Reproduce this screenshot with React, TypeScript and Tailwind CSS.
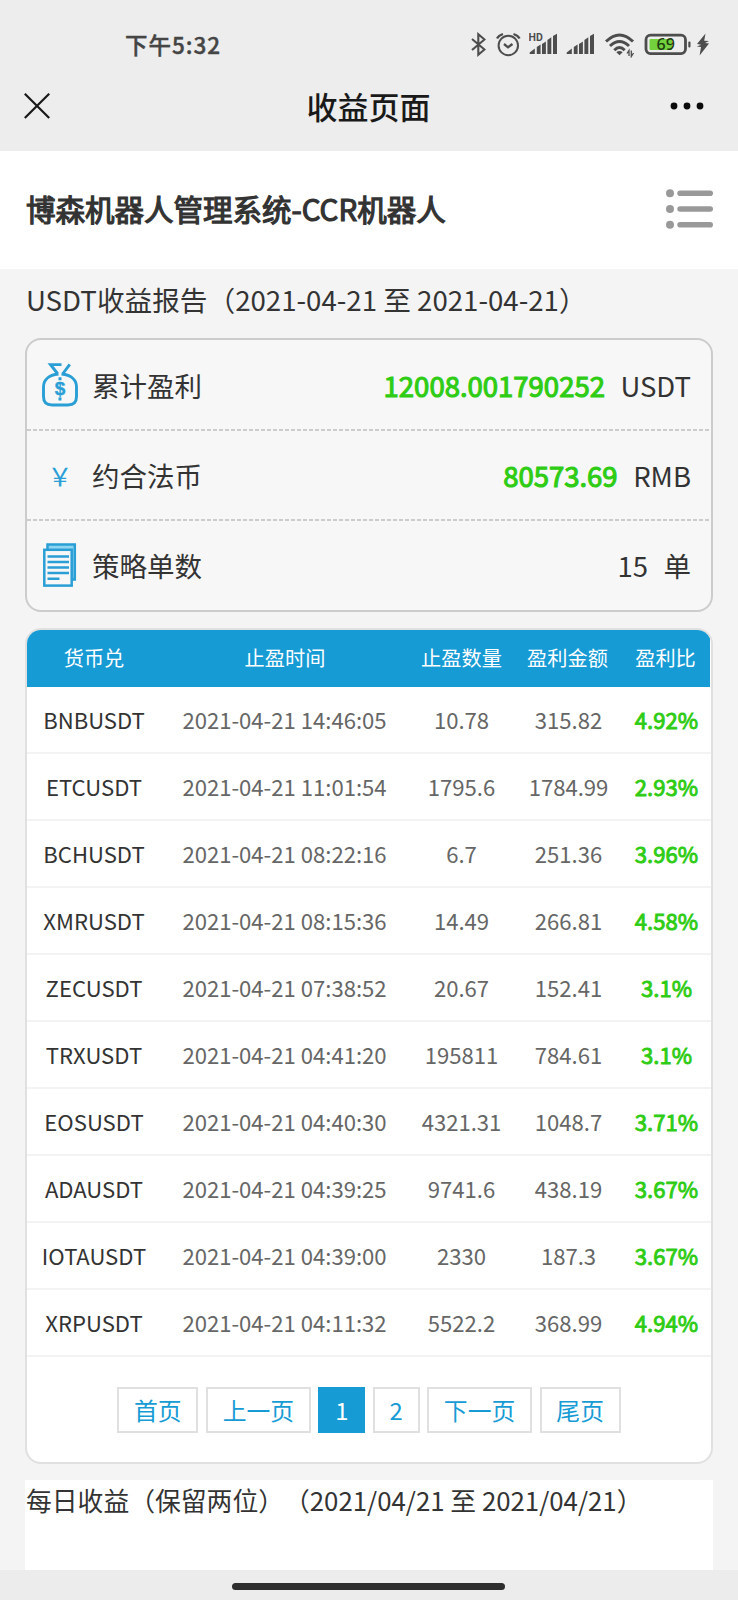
import React from "react";

interface Order {
  pair: string;
  time: string;
  amount: string;
  profit: string;
  ratio: string;
}

const orders: Order[] = [
  { pair: "BNBUSDT", time: "2021-04-21 14:46:05", amount: "10.78", profit: "315.82", ratio: "4.92%" },
  { pair: "ETCUSDT", time: "2021-04-21 11:01:54", amount: "1795.6", profit: "1784.99", ratio: "2.93%" },
  { pair: "BCHUSDT", time: "2021-04-21 08:22:16", amount: "6.7", profit: "251.36", ratio: "3.96%" },
  { pair: "XMRUSDT", time: "2021-04-21 08:15:36", amount: "14.49", profit: "266.81", ratio: "4.58%" },
  { pair: "ZECUSDT", time: "2021-04-21 07:38:52", amount: "20.67", profit: "152.41", ratio: "3.1%" },
  { pair: "TRXUSDT", time: "2021-04-21 04:41:20", amount: "195811", profit: "784.61", ratio: "3.1%" },
  { pair: "EOSUSDT", time: "2021-04-21 04:40:30", amount: "4321.31", profit: "1048.7", ratio: "3.71%" },
  { pair: "ADAUSDT", time: "2021-04-21 04:39:25", amount: "9741.6", profit: "438.19", ratio: "3.67%" },
  { pair: "IOTAUSDT", time: "2021-04-21 04:39:00", amount: "2330", profit: "187.3", ratio: "3.67%" },
  { pair: "XRPUSDT", time: "2021-04-21 04:11:32", amount: "5522.2", profit: "368.99", ratio: "4.94%" },
];

const pages = ["首页", "上一页", "1", "2", "下一页", "尾页"];

const SignalBars: React.FC<{ hd?: boolean }> = ({ hd }) => (
  <svg width="29" height="26" viewBox="0 0 29 26" fill="#4d4d4d">
    {hd && (
      <text x="-0.5" y="9" fontSize="10.5" fontWeight="700" fontFamily="Roboto">
        HD
      </text>
    )}
    <path d="M0.7 22 V20.5 L5.8 16.5 V22Z" />
    <path d="M7.8 22 V15 L11.6 12.5 V22Z" />
    <path d="M13 22 V12 L16.9 9.5 V22Z" />
    <path d="M18.4 22 V8 L22.3 5.2 V22Z" />
    <path d="M24 22 V4 L28 1.8 V22Z" />
  </svg>
);

const StatusBar: React.FC = () => (
  <div className="flex h-[60px] items-start pt-8 pl-[125px]">
    <span className="mt-[-3px] w-[346px] text-[22.5px] leading-[30px] font-medium tracking-[1px] text-[#454545] [-webkit-text-stroke:0.4px_#454545]">
      下午5:32
    </span>
    <svg width="15" height="26" viewBox="0 0 15 26" fill="none" stroke="#4d4d4d" strokeWidth="2.1">
      <path d="M1 7 L13.5 17.5 L7.3 22.8 V2.2 L13.5 7.5 L1 18" />
    </svg>
    <svg className="ml-[10px]" width="25" height="26" viewBox="0 0 25 26" fill="none" stroke="#4d4d4d" strokeWidth="2">
      <circle cx="12.3" cy="13.5" r="9.7" />
      <path d="M8 12 L12 15.3 L16.5 12" strokeWidth="2.3" />
      <path d="M1 6.5 Q2.5 3.5 7 2 M17.5 2 Q22 3.5 23.6 6.5" strokeWidth="2.3" />
    </svg>
    <div className="ml-2">
      <SignalBars hd />
    </div>
    <div className="ml-2">
      <SignalBars />
    </div>
    <svg className="ml-[10px]" width="30" height="26" viewBox="0 0 30 26" fill="none" stroke="#4d4d4d" strokeWidth="3">
      <path d="M1 9.5 Q14.5 -3.5 28 9.5" />
      <path d="M5 14 Q14.5 5 24 14" />
      <path d="M9.3 18.2 Q14.5 12.8 19.7 18.2" />
      <path d="M11.3 20.3 Q14.5 17.5 17.7 20.3 L14.5 23.3Z" fill="#4d4d4d" stroke="none" />
      <path d="M22 21.5 L24 18.5 V24 M26.3 18.5 V24.5 L28.5 21" strokeWidth="1.3" />
    </svg>
    <svg className="ml-[9px]" width="48" height="26" viewBox="0 0 48 26">
      <rect x="2" y="3.2" width="39.5" height="18.4" rx="4.5" fill="none" stroke="#4d4d4d" strokeWidth="2.8" />
      <rect x="5.5" y="7" width="22.5" height="11" rx="1" fill="#72d13c" />
      <rect x="44.3" y="9.5" width="2.2" height="6" rx="1" fill="#4d4d4d" />
      <text x="21.7" y="18.4" textAnchor="middle" fontSize="16" fontWeight="500" fontFamily="Noto Sans" fill="#1d3a10">
        69
      </text>
    </svg>
    <svg className="ml-[4px]" width="14" height="26" viewBox="0 0 14 26" fill="#4d4d4d">
      <path d="M9.5 1.5 L1 12 L5.2 12.8 L0.8 14.5 L5 15 L3.6 23.5 L13 11.5 L9 11 L13 9 L8.2 8.8Z" />
    </svg>
  </div>
);

const NavBar: React.FC = () => (
  <div className="flex h-[91px] items-center justify-between pr-[34px] pl-6">
    <svg className="mr-[10px] w-[26px]" width="26" height="26" viewBox="0 0 26 26" stroke="#191919" strokeWidth="2.2">
      <path d="M0.8 0.8 L25.2 25 M25.2 0.8 L0.8 25" />
    </svg>
    <span className="-mt-px ml-[7px] text-[31px] leading-none font-medium text-[#191919]">收益页面</span>
    <svg width="34" height="8" viewBox="0 0 34 8" fill="#0a0a0a">
      <circle cx="4" cy="4" r="3.4" />
      <circle cx="17" cy="4" r="3.4" />
      <circle cx="30" cy="4" r="3.4" />
    </svg>
  </div>
);

const MoneyBagIcon: React.FC = () => (
  <svg width="36" height="44" viewBox="0 0 36 44" fill="none" stroke="#2a9fd6" strokeWidth="2.9">
    <path d="M19.5 1.6 H8.5 L15.5 10.5 M27.8 1.4 L21 10.5" />
    <path d="M16.5 11 C6 12 1.5 17.5 1.5 24 V33.5 Q1.5 42 10 42 H26 Q34.5 42 34.5 33.5 V24 C34.5 17.5 30 12 19.5 11" />
    <text x="18" y="32.3" textAnchor="middle" fontSize="19" fontWeight="700" fontFamily="Liberation Sans" fill="#2a9fd6" stroke="#2a9fd6" strokeWidth="0.4">
      $
    </text>
    <path d="M16.5 15.7 H19.5 M16.5 36 H19.5" />
  </svg>
);

const OrdersIcon: React.FC = () => (
  <svg width="34" height="44" viewBox="0 0 34 44" fill="none" stroke="#2a9fd6" strokeWidth="2.5">
    <path d="M4.5 6 V1.5 H31.8 V36.5 H29" fill="#8fd4f0" />
    <rect x="1.3" y="6.8" width="27.4" height="35.8" fill="#f7f7f7" />
    <path d="M4.5 13.6 H26 M4.5 19 H26 M4.5 24.5 H26 M4.5 30 H26 M4.5 35.7 H16.5" />
  </svg>
);

const SummaryRow: React.FC<{ icon: React.ReactNode; label: string; children: React.ReactNode }> = ({
  icon,
  label,
  children,
}) => (
  <div className="flex h-[90px] items-center pr-[20px] pl-[15px] text-[27.5px] text-[#333]">
    <div className="flex w-9 justify-center">{icon}</div>
    <span className="ml-[14px] flex-1 pt-[2px]">{label}</span>
    <div className="flex pt-px">{children}</div>
  </div>
);

const DashedLine: React.FC = () => (
  <svg className="-my-px block" width="684" height="2" viewBox="0 0 684 2">
    <path d="M0 1 H684" stroke="#ccc" strokeWidth="2" strokeDasharray="4 2" />
  </svg>
);

const Summary: React.FC = () => (
  <div className="mx-[25px] h-[274px] rounded-2xl border-2 border-[#ccc] bg-[#f7f7f7]">
    <SummaryRow icon={<MoneyBagIcon />} label="累计盈利">
      <span className="text-[#2ecc14] [-webkit-text-stroke:1.1px_#2ecc14]">12008.001790252</span>
      <span className="ml-[15.5px]">USDT</span>
    </SummaryRow>
    <DashedLine />
    <SummaryRow icon={<span className="text-[25px] leading-[44px] text-[#2a9fd6]">￥</span>} label="约合法币">
      <span className="text-[#2ecc14] [-webkit-text-stroke:1.1px_#2ecc14]">80573.69</span>
      <span className="ml-[15.5px]">RMB</span>
    </SummaryRow>
    <DashedLine />
    <SummaryRow icon={<OrdersIcon />} label="策略单数">
      <span>15</span>
      <span className="ml-[15.5px]">单</span>
    </SummaryRow>
  </div>
);

const OrderTable: React.FC = () => (
  <div className="mx-[25px] mt-4 h-[836px] overflow-hidden rounded-2xl border-2 border-[#e0e0e0] bg-white">
    <div className="mr-px grid h-[57px] grid-cols-[134px_248px_105px_107px_89px] items-center bg-[#169bd5] text-center text-[20.2px] text-white">
      <span>货币兑</span>
      <span>止盈时间</span>
      <span>止盈数量</span>
      <span>盈利金额</span>
      <span>盈利比</span>
    </div>
    {orders.map((order) => (
      <div
        key={order.pair}
        className="grid h-[67px] grid-cols-[134px_247px_107px_107px_89px] items-center border-b-2 border-[#f3f3f3] text-center text-[22.1px] text-[#666]"
      >
        <span className="text-[#333]">{order.pair}</span>
        <span>{order.time}</span>
        <span>{order.amount}</span>
        <span>{order.profit}</span>
        <span className="text-[#2ecc14] [-webkit-text-stroke:0.9px_#2ecc14]">{order.ratio}</span>
      </div>
    ))}
    <div className="mt-[30px] flex justify-center gap-[7.5px] text-[23.8px] leading-[42px]">
      {pages.map((page) => (
        <button
          key={page}
          className={
            page === "1"
              ? "h-[46px] border-2 border-[#169bd5] bg-[#169bd5] px-[14.8px] text-white"
              : "h-[46px] border-2 border-[#e0e0e0] px-[14.8px] text-[#169bd5]"
          }
        >
          {page}
        </button>
      ))}
    </div>
  </div>
);

const App: React.FC = () => {
  return (
    <div className="flex h-[1600px] w-[738px] flex-col overflow-hidden bg-[#f4f4f4] font-['Noto_Sans_CJK_SC',sans-serif] whitespace-nowrap">
      <div className="bg-[#ededed]">
        <StatusBar />
        <NavBar />
      </div>
      <div className="flex h-[118px] items-center justify-between bg-white pr-[25px] pb-[2px] pl-[26px]">
        <h1 className="text-[29.5px] leading-none text-[#333] [-webkit-text-stroke:1.2px_#333]">
          博森机器人管理系统-CCR机器人
        </h1>
        <svg width="47" height="40" viewBox="0 0 47 40" fill="#999">
          <circle cx="4" cy="4.3" r="4" />
          <circle cx="4" cy="20" r="4" />
          <circle cx="4" cy="35.7" r="4" />
          <rect x="11.3" y="1.5" width="35.7" height="5.6" rx="2.8" />
          <rect x="11.3" y="17.2" width="35.7" height="5.6" rx="2.8" />
          <rect x="11.3" y="32.9" width="35.7" height="5.6" rx="2.8" />
        </svg>
      </div>
      <div className="flex h-[69px] items-center pb-2 pl-[26px] text-[27.65px] text-[#333]">
        USDT收益报告（2021-04-21 至 2021-04-21）
      </div>
      <Summary />
      <OrderTable />
      <div className="mx-[25px] mt-4 h-[90px] bg-white pl-px text-[25.8px] leading-[39px] text-[#333] [text-spacing-trim:space-all]">
        每日收益（保留两位）（2021/04/21 至 2021/04/21）
      </div>
      <div className="flex h-[30px] justify-center bg-[#ececec] pt-[13px] pr-[2px]">
        <div className="h-[7px] w-[273px] rounded-full bg-[#2e2e2e]" />
      </div>
    </div>
  );
};

export default App;
